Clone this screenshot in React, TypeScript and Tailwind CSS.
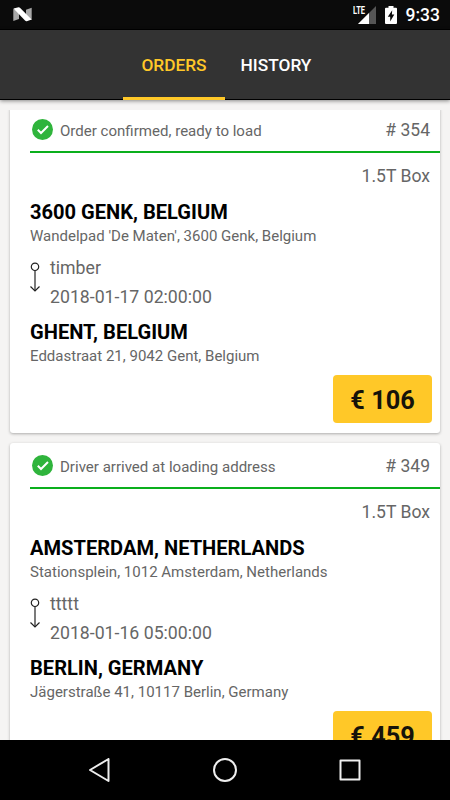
import React from 'react';

type Order = {
  id: number;
  status: string;
  vehicle: string;
  fromCity: string;
  fromAddress: string;
  cargo: string;
  date: string;
  toCity: string;
  toAddress: string;
  price: number;
};

const orders: Order[] = [
  {
    id: 354,
    status: 'Order confirmed, ready to load',
    vehicle: '1.5T Box',
    fromCity: '3600 GENK, BELGIUM',
    fromAddress: "Wandelpad 'De Maten', 3600 Genk, Belgium",
    cargo: 'timber',
    date: '2018-01-17 02:00:00',
    toCity: 'GHENT, BELGIUM',
    toAddress: 'Eddastraat 21, 9042 Gent, Belgium',
    price: 106,
  },
  {
    id: 349,
    status: 'Driver arrived at loading address',
    vehicle: '1.5T Box',
    fromCity: 'AMSTERDAM, NETHERLANDS',
    fromAddress: 'Stationsplein, 1012 Amsterdam, Netherlands',
    cargo: 'ttttt',
    date: '2018-01-16 05:00:00',
    toCity: 'BERLIN, GERMANY',
    toAddress: 'Jägerstraße 41, 10117 Berlin, Germany',
    price: 459,
  },
];

function StatusBar() {
  return (
    <div className="flex h-[30px] shrink-0 items-center justify-between border-b border-black bg-[#0b0b0b] pr-2.5 pl-[13px] text-white">
      <svg className="h-[15px] w-[19px]" viewBox="0 0 19 15">
        <path d="M0.3 1.8 L6 4 V12 L0.3 14 Z" fill="#a8a8a8" />
        <path d="M13 2.8 L18.7 0.8 V13 L13 11 Z" fill="#a8a8a8" />
        <path d="M0.5 1.6 L5.6 0.3 Q6.6 0.3 7.2 0.9 L18.6 12.6 L13.8 14.2 Q12.8 14.4 12 13.6 Z" fill="#fff" />
      </svg>
      <div className="flex h-full items-center">
        <div className="flex h-[19px] items-end">
          <span className="mr-[-8px] w-[13px] origin-left scale-x-[0.68] self-start text-[11px] leading-[11px] font-bold">LTE</span>
          <svg className="h-[18px] w-[18px]" viewBox="0 0 18 18">
            <path d="M18 0 V18 H0 Z" fill="#555" />
            <path d="M11 7 V18 H0 Z" fill="#fff" />
          </svg>
        </div>
        <svg className="ml-[9px] h-[18px] w-3" viewBox="0 0 12 18">
          <path d="M3.5 0 H8.5 V1.8 H11 Q12 1.8 12 2.8 V17 Q12 18 11 18 H1 Q0 18 0 17 V2.8 Q0 1.8 1 1.8 H3.5 Z" fill="#fff" />
          <path d="M7.2 4.3 L2.8 10.8 H5.2 V15.4 L9.3 8.6 H6.9 Z" fill="#0b0b0b" />
        </svg>
        <span className="ml-[9px] pt-px text-[17.5px] leading-[30px] font-medium">9:33</span>
      </div>
    </div>
  );
}

function Tabs() {
  return (
    <div className="z-10 flex h-[70px] shrink-0 justify-center border-b border-black bg-[#333] text-[17.3px] font-medium shadow-[0_1px_4px_rgba(0,0,0,0.45)]">
      <div className="-mb-px flex w-[102px] items-center justify-center border-b-[3px] border-[#ffc828] pt-[5px] text-[#ffc828]">ORDERS</div>
      <div className="-mb-px flex w-[102px] items-center justify-center border-b-[3px] border-transparent pt-[5px] text-white">HISTORY</div>
    </div>
  );
}

function OrderCard({ order }: { order: Order }) {
  return (
    <div className="flex h-[326px] shrink-0 flex-col rounded-[3px] bg-white pl-5 text-[#666] shadow-[0_1px_3px_rgba(0,0,0,0.3)]">
      <div className="flex h-[46px] items-center border-b-[2.5px] border-[#0aaf1c] pr-2.5">
        <svg className="mt-px ml-0.5 h-[21px] w-[21px]" viewBox="0 0 21 21">
          <circle cx="10.5" cy="10.5" r="10.5" fill="#2fb43c" />
          <path d="M5.8 10.8 L9 14 L16 7" fill="none" stroke="#fff" strokeWidth="2" />
        </svg>
        <span className="ml-[7px] pt-[5px] text-[15.05px]">{order.status}</span>
        <span className="ml-auto pt-[3px] text-[17.5px]"># {order.id}</span>
      </div>
      <div className="flex h-[47px] items-center justify-end pr-2.5 text-[17.6px]">{order.vehicle}</div>
      <div className="h-6 text-[20.1px] leading-6 font-bold text-black">{order.fromCity}</div>
      <div className="h-6 text-[15.03px] leading-6">{order.fromAddress}</div>
      <div className="mt-1.5 flex h-[58px]">
        <svg className="mt-2 h-[31px] w-2.5" viewBox="0 0 10 31" fill="none" stroke="#222" strokeWidth="1.2">
          <circle cx="5" cy="4.8" r="3.7" />
          <path d="M5 8.5 V29" />
          <path d="M0.5 24.5 L5 29 L9.5 24.5" />
        </svg>
        <div className="ml-2.5 text-[17.7px] leading-[29px]">
          <div>{order.cargo}</div>
          <div>{order.date}</div>
        </div>
      </div>
      <div className="mt-2 h-6 text-[20.1px] leading-6 font-bold text-black">{order.toCity}</div>
      <div className="h-6 text-[15.03px] leading-6">{order.toAddress}</div>
      <div className="mt-[7px] mr-2 flex h-12 w-[99px] items-center justify-center self-end rounded-[4px] bg-[#ffc828] pt-[3px] text-[25.3px] font-bold text-[#16130a]">
        € {order.price}
      </div>
    </div>
  );
}

function NavBar() {
  return (
    <div className="z-10 flex h-[60px] shrink-0 items-center justify-center gap-[101px] bg-black">
      <svg className="h-6 w-6" viewBox="0 0 24 24" fill="none" stroke="#eee" strokeWidth="2" strokeLinejoin="round">
        <path d="M20.5 1 V23 L2 12 Z" />
      </svg>
      <svg className="h-6 w-6" viewBox="0 0 24 24" fill="none" stroke="#eee" strokeWidth="2">
        <circle cx="12" cy="12" r="11" />
      </svg>
      <svg className="h-6 w-6" viewBox="0 0 24 24" fill="none" stroke="#eee" strokeWidth="2" strokeLinejoin="round">
        <rect x="2.5" y="2.5" width="19" height="19" />
      </svg>
    </div>
  );
}

export default function App() {
  return (
    <div className="flex h-[800px] w-[450px] flex-col overflow-hidden bg-[#f5f4f3] font-['Roboto',sans-serif]">
      <StatusBar />
      <Tabs />
      {/* scrolled list of orders */}
      <div className="mt-2.5 min-h-0 flex-1 overflow-hidden px-2.5">
        <div className="-mt-[3px] flex flex-col gap-2.5">
          {orders.map((order) => (
            <OrderCard key={order.id} order={order} />
          ))}
        </div>
      </div>
      <NavBar />
    </div>
  );
}
